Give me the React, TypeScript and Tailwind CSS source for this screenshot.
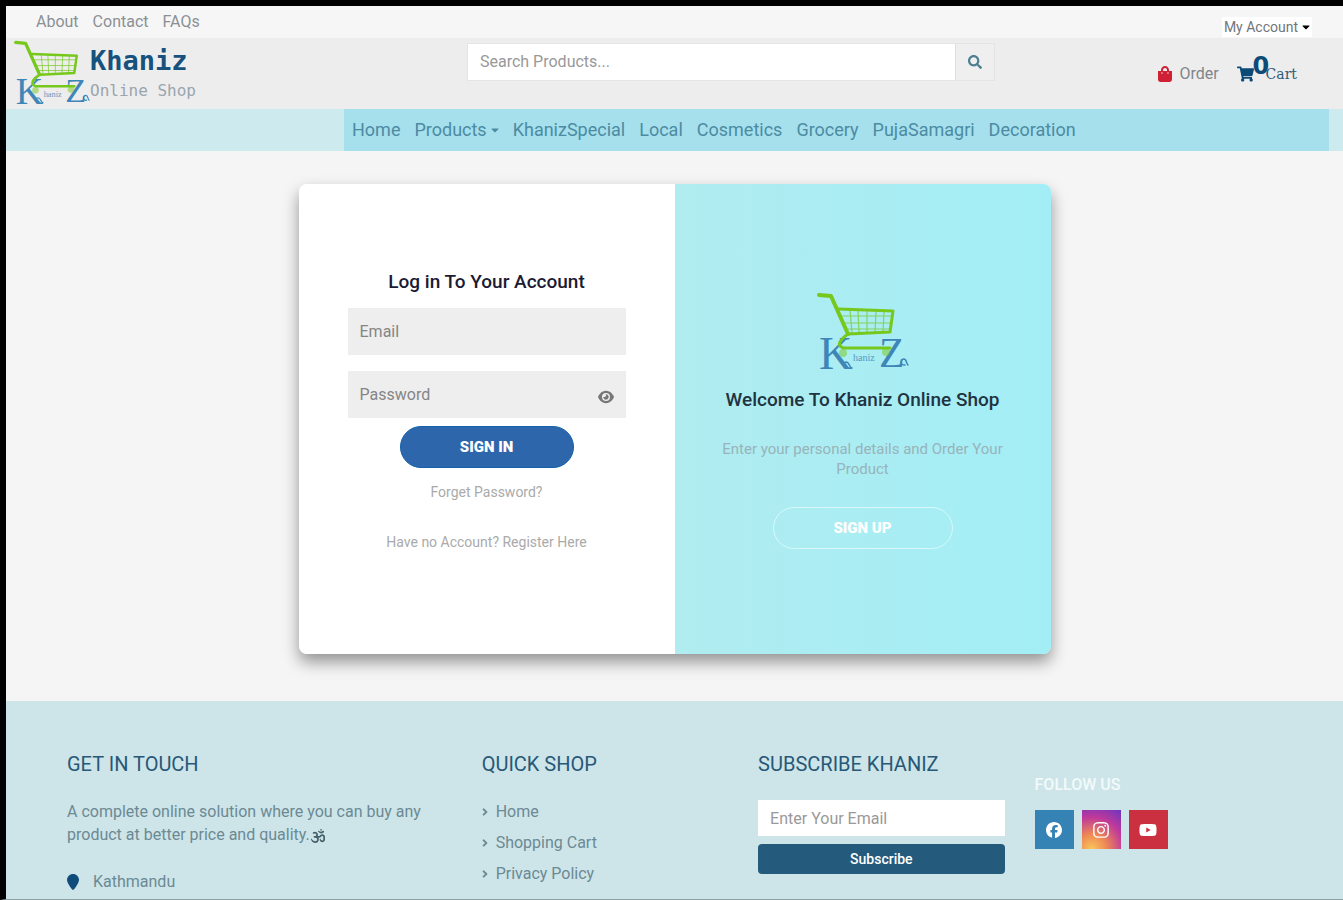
import React from "react";
import { FaEye, FaFacebook, FaInstagram, FaLocationPin, FaOm, FaYoutube } from "react-icons/fa6";
import { FaCaretDown, FaShoppingBag, FaShoppingCart, FaSearch, FaAngleRight } from "react-icons/fa";

const topLinks = ["About", "Contact", "FAQs"];

const navLinks = [
  "Home",
  "Products",
  "KhanizSpecial",
  "Local",
  "Cosmetics",
  "Grocery",
  "PujaSamagri",
  "Decoration",
];

const shopLinks = ["Home", "Shopping Cart", "Privacy Policy"];

const Logo = ({ className }: { className?: string }) => (
  <svg viewBox="0 0 92 80" className={`shrink-0 overflow-visible ${className}`} aria-label="Khaniz logo">
    <g fill="#3f86b8" fontFamily="'Liberation Serif', serif">
      <text x="2" y="77" fontSize="46">K</text>
      <text x="36" y="69" fontSize="10" opacity="0.8">haniz</text>
      <text x="62" y="75" fontSize="42">Z</text>
    </g>
    <g fill="none" stroke="#3f86b8" strokeWidth="1.5" strokeLinecap="round">
      <path d="M31 76 C26 76 25 71 29 70 C33 70 32 76 35 76" />
      <path d="M88 73 C83 74 83 67 87 67 C90 67 89 72 91 73" />
    </g>
    <circle cx="26" cy="61" r="4" fill="#76c81c" opacity="0.5" />
    <circle cx="69" cy="60" r="4" fill="#76c81c" opacity="0.5" />
    <g fill="none" stroke="#76c81c" strokeLinecap="round" strokeLinejoin="round">
      <path d="M25 24 H75 M28 31 H75 M31 37 H74 M33 18 L35 41 M41 18 L42 41 M50 18 V41 M59 19 L58 41 M67 19 L66 41" strokeWidth="1.2" opacity="0.7" />
      <path d="M22 17 L76 19 L73 40 L31 42 C25 46 21 51 23 54 L26 56 L73 56" strokeWidth="3" />
      <path d="M2 3 L14 4 L31 42" strokeWidth="4" />
    </g>
  </svg>
);

const TopBar = () => (
  <div className="flex h-8 items-center justify-between bg-[#f6f6f6] pr-[31px] pl-[30px] text-[#8b9095]">
    <nav className="flex gap-3.5">
      {topLinks.map((label) => (
        <a key={label} href="#">{label}</a>
      ))}
    </nav>
    <button className="mt-2.5 flex items-center gap-1 bg-white px-0.5 text-sm text-[#71767b]">
      My Account
      <FaCaretDown className="h-3 w-2 text-black" />
    </button>
  </div>
);

const Header = () => (
  <header className="grid h-[71px] grid-cols-[461fr_528fr_348fr] bg-[#ededed]">
    <a href="#" className="flex items-start pt-0.5 pl-2">
      <Logo className="h-[66px] w-[76px]" />
      <span className="flex flex-col pt-[3px] font-['DejaVu_Sans_Mono',monospace]">
        <span className="text-[27px] leading-9 font-bold text-[#16527d]">Khaniz</span>
        <span className="text-base leading-6 text-[#9aa5ad]">Online Shop</span>
      </span>
    </a>
    <form className="mt-[5px] flex h-[38px] border border-[#e4e4e4]">
      <input
        type="search"
        aria-label="Search Products"
        placeholder="Search Products..."
        className="min-w-0 flex-1 bg-white px-3 outline-none placeholder:text-[#999999]"
      />
      <button type="button" aria-label="Search" className="flex w-[39px] items-center justify-center border-l border-[#e0e0e0] bg-[#efefef]">
        <FaSearch className="h-3.5 w-3.5 text-[#4d7f91]" />
      </button>
    </form>
    <div className="flex h-[71px] items-center justify-end gap-[18px] pr-[46px]">
      <a href="#" className="flex items-center gap-1.5 text-[#7f858a]">
        <FaShoppingBag className="h-4 w-4 text-[#cf2035]" />
        Order
      </a>
      <a href="#" className="relative flex items-center gap-3 text-[#2f5a78]">
        <FaShoppingCart className="h-4 w-[17px] text-[#0c4a78]" />
        <span className="absolute -top-2.5 left-4 font-['DejaVu_Sans',sans-serif] text-2xl leading-none font-bold text-[#0c4a78]">0</span>
        <span className="font-['DejaVu_Serif',serif] text-sm">Cart</span>
      </a>
    </div>
  </header>
);

const NavBar = () => (
  <div className="grid h-[42px] grid-cols-[338fr_985fr] bg-[#cdeaee] pr-3.5">
    <nav className="col-start-2 flex items-center gap-3.5 bg-[#a5e0ec] pl-2 text-lg text-[#4c8ba3]">
      {navLinks.map((label) => (
        <a key={label} href="#" className="flex items-center gap-1">
          {label}
          {label === "Products" && <FaCaretDown className="h-3 w-2" />}
        </a>
      ))}
    </nav>
  </div>
);

const LoginPanel = () => (
  <form className="flex w-1/2 flex-col items-center bg-white px-[49px] pt-[84px]">
    <h1 className="text-[19px] leading-7 font-medium text-[#1b1b33]">Log in To Your Account</h1>
    <input
      type="email"
      aria-label="Email"
      placeholder="Email"
      className="mt-3 h-[47px] w-full bg-[#eeeeee] px-3 outline-none placeholder:text-[#858585]"
    />
    <div className="relative mt-4 w-full">
      <input
        type="password"
        aria-label="Password"
        placeholder="Password"
        className="h-[47px] w-full bg-[#eeeeee] px-3 outline-none placeholder:text-[#858585]"
      />
      <button type="button" aria-label="Show password" className="absolute top-[18px] right-3 text-[#777777]">
        <FaEye className="h-4 w-4" />
      </button>
    </div>
    <button type="button" className="mt-2 h-[42px] w-[174px] rounded-full border border-[#1462ab] bg-[#2d66ab] text-[15px] font-black text-white">
      SIGN IN
    </button>
    <a href="#" className="mt-[14px] text-sm text-[#aaaaaa]">Forget Password?</a>
    <a href="#" className="mt-[30px] text-sm text-[#aaaaaa]">Have no Account? Register Here</a>
  </form>
);

const WelcomePanel = () => (
  <section className="flex w-1/2 flex-col items-center bg-linear-to-r from-[#b0ecf0] to-[#a3eef6] px-10 pt-[108px] text-center">
    <Logo className="h-20 w-[92px]" />
    <h2 className="mt-3.5 text-[19px] leading-7 font-medium text-[#1f3340]">Welcome To Khaniz Online Shop</h2>
    <p className="mt-[25px] text-[15px] leading-5 text-[#98b3ba]">
      Enter your personal details and Order Your Product
    </p>
    <button className="mt-7 h-[42px] w-[180px] rounded-full border border-[#d9f8fb] text-[15px] font-black text-white">
      SIGN UP
    </button>
  </section>
);

const Footer = () => (
  <footer className="grid flex-1 grid-cols-9 bg-[#cde5e8] pt-[49px] pr-8 pl-[61px] text-[#6c8994]">
    <section className="col-span-3">
      <h3 className="text-xl leading-7 text-[#275878]">GET IN TOUCH</h3>
      <p className="mt-[22px] max-w-[360px] leading-[23px]">
        A complete online solution where you can buy any product at better price and quality.
        <FaOm className="inline h-3.5 w-4 align-middle text-[#46616d]" />
      </p>
      <p className="mt-6 flex items-center gap-3.5 leading-6">
        <FaLocationPin className="h-4 w-3 text-[#0f4c7c]" />
        Kathmandu
      </p>
    </section>
    <section className="col-span-2">
      <h3 className="text-xl leading-7 text-[#275878]">QUICK SHOP</h3>
      <ul className="mt-[22px] flex flex-col gap-[7px]">
        {shopLinks.map((label) => (
          <li key={label}>
            <a href="#" className="flex items-center gap-2 leading-6">
              <FaAngleRight className="h-3 w-1.5" />
              {label}
            </a>
          </li>
        ))}
      </ul>
    </section>
    <form className="col-span-2 pr-[30px]">
      <h3 className="text-xl leading-7 text-[#275878]">SUBSCRIBE KHANIZ</h3>
      <input
        type="email"
        aria-label="Your email"
        placeholder="Enter Your Email"
        className="mt-[22px] h-9 w-full bg-white px-3 outline-none placeholder:text-[#999999]"
      />
      <button type="button" className="mt-2 h-[30px] w-full rounded-sm bg-[#245b7d] text-sm font-medium text-white">
        Subscribe
      </button>
    </form>
    <section className="col-span-2 pt-[25px]">
      <h4 className="leading-5 font-medium text-[#f2fafb]">FOLLOW US</h4>
      <div className="mt-[15px] flex gap-2 text-white">
        <a href="#" aria-label="Facebook" className="flex h-[39px] w-[39px] items-center justify-center bg-[#3583b5]">
          <FaFacebook className="h-4 w-4" />
        </a>
        <a href="#" aria-label="Instagram" className="flex h-[39px] w-[39px] items-center justify-center bg-[radial-gradient(circle_at_25%_100%,#fbc55a_0%,#ee8a55_30%,#c0399a_65%,#6a35c0_100%)]">
          <FaInstagram className="h-[18px] w-[18px]" />
        </a>
        <a href="#" aria-label="YouTube" className="flex h-[39px] w-[39px] items-center justify-center bg-[#cb3040]">
          <FaYoutube className="h-5 w-[18px]" />
        </a>
      </div>
    </section>
  </footer>
);

export default function App() {
  return (
    <div className="flex min-h-screen flex-col border-t-[6px] border-b border-l-[6px] border-t-black border-b-[#8ea3a6] border-l-black bg-[#f5f5f5] font-[Roboto,sans-serif]">
      <TopBar />
      <Header />
      <NavBar />
      <main className="px-4 pt-[33px] pb-[47px]">
        <div className="mx-auto flex min-h-[470px] max-w-[752px] overflow-hidden rounded-lg shadow-[0_8px_16px_rgba(0,0,0,0.4)]">
          <LoginPanel />
          <WelcomePanel />
        </div>
      </main>
      <Footer />
    </div>
  );
}
